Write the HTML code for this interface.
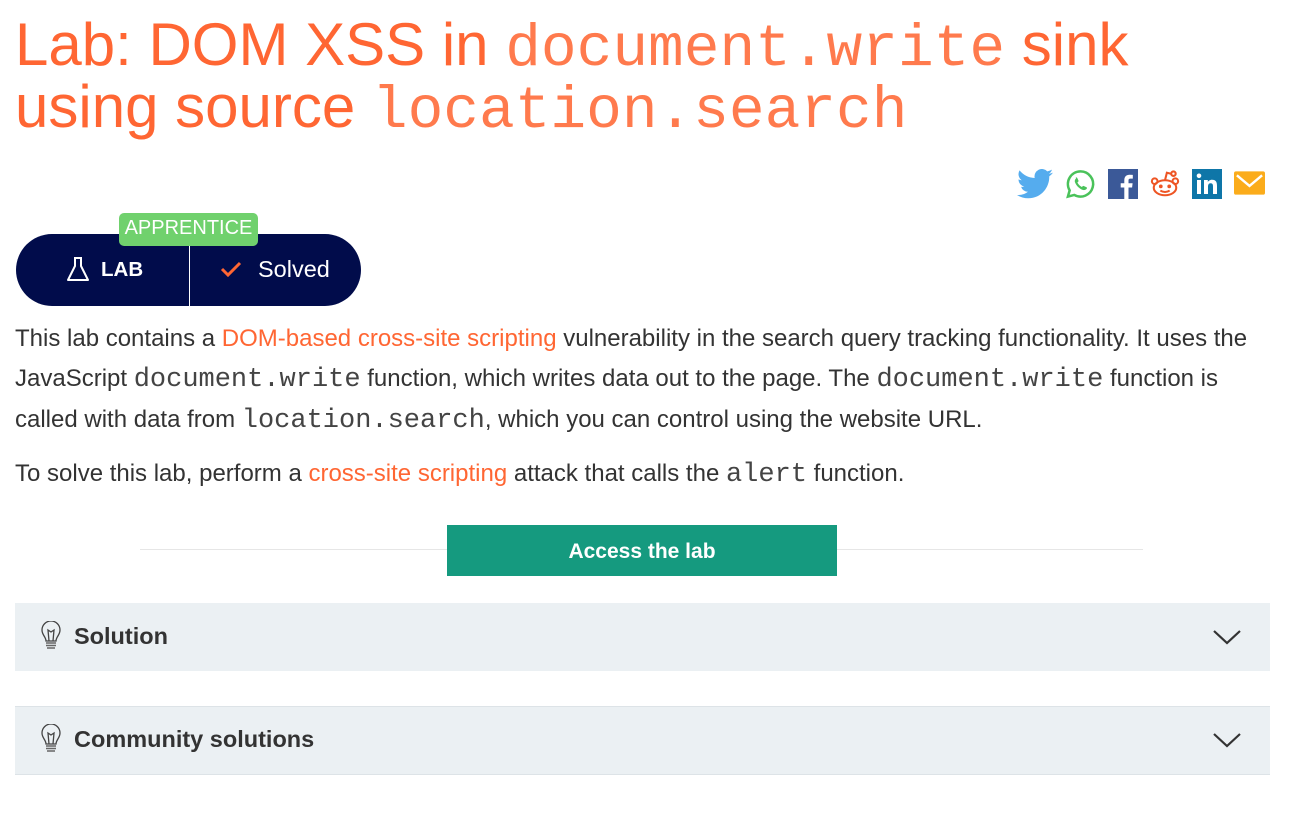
<!DOCTYPE html>
<html><head><meta charset="utf-8"><style>
body{margin:0;background:#fff;font-family:"Liberation Sans",Arial,sans-serif;color:#333;width:1293px;height:832px;overflow:hidden;position:relative}
h1{position:absolute;left:15px;top:16px;margin:0;font-size:60px;line-height:57px;font-weight:normal;color:#ff6633;width:1250px}
h1 code,p code{font-family:"Liberation Mono",monospace;font-weight:normal}
h1 code{font-size:59.5px;color:#ff7a4d}
.share{position:absolute;top:168px;left:1017px;display:flex;gap:12px;align-items:center}
.badge{position:absolute;left:16px;top:234px;width:345px;height:72px;background:#010c4b;border-radius:36px}
.app{position:absolute;left:119px;top:213px;width:139px;height:33px;background:#70d16d;color:#fff;border-radius:5px;font-size:20px;text-align:center;line-height:31px}
.div{position:absolute;left:189px;top:246px;width:1px;height:60px;background:#fff}
.lab{position:absolute;left:101px;top:258px;color:#fff;font-weight:bold;font-size:20.5px}
.sol{position:absolute;left:258px;top:256px;color:#fff;font-size:23.5px}
p{position:absolute;left:15px;margin:0;font-size:24px;line-height:40px;width:1265px;color:#333}
p code{font-size:27px;color:#444}
a{color:#ff6633;text-decoration:none}
.line{position:absolute;left:140px;top:549px;width:1003px;height:1px;background:#e6e6e6}
.btn{position:absolute;left:447px;top:525px;width:390px;height:51px;background:#159a7f;color:#fff;font-weight:bold;font-size:21px;text-align:center;line-height:53px}
.acc{position:absolute;left:15px;width:1255px;background:#ebf0f3;font-weight:bold;font-size:23.5px;color:#333}
.acc span{position:absolute;left:59px}
.acc svg.b{position:absolute;left:25px}
.acc svg.c{position:absolute;right:28px}
</style></head><body>
<h1>Lab: DOM XSS in <code>document.write</code> sink using source <code>location.search</code></h1>
<div class="share">
<svg width="36" height="30" viewBox="0 0 24 20"><path fill="#55acee" d="M24 2.4a9.8 9.8 0 0 1-2.8.8A4.9 4.9 0 0 0 23.3.4a9.9 9.9 0 0 1-3.1 1.2A4.9 4.9 0 0 0 11.8 6 14 14 0 0 1 1.7.9a4.9 4.9 0 0 0 1.5 6.6A4.9 4.9 0 0 1 1 6.9a4.9 4.9 0 0 0 3.9 4.8 4.9 4.9 0 0 1-2.2.1 4.9 4.9 0 0 0 4.6 3.4A9.9 9.9 0 0 1 0 17.3 14 14 0 0 0 7.5 19.5c9 0 14-7.5 14-14v-.6A10 10 0 0 0 24 2.4z"/></svg>
<svg width="31" height="32" viewBox="0 0 32 32"><path fill="none" stroke="#4ac25a" stroke-width="2.6" d="M16 3a13 13 0 0 0-11.2 19.6L3 29l6.6-1.7A13 13 0 1 0 16 3z"/><path fill="#4ac25a" d="M11 9.5c.5-.4 1.3-.4 1.6.2l1.3 2.8c.2.4 0 .9-.3 1.2l-.8.8c1 2 2.6 3.6 4.6 4.6l.8-.8c.3-.3.8-.5 1.2-.3l2.8 1.3c.6.3.6 1.1.2 1.6-1 1.2-2.6 1.8-4.2 1.2-3.6-1.4-6.5-4.3-7.9-7.9-.6-1.6 0-3.2 1.2-4.2z"/></svg>
<svg width="30" height="30" viewBox="0 0 30 30"><rect width="30" height="30" fill="#3b5998"/><path fill="#fff" d="M20.5 30V18.5h3.6l.5-4.2h-4.1v-2.7c0-1.2.3-2 2.1-2h2.2V5.9a29 29 0 0 0-3.2-.2c-3.2 0-5.3 1.900-5.3 5.5v3.1h-3.6v4.2h3.6V30z"/></svg>
<svg width="30" height="30" viewBox="0 0 32 30"><g fill="none" stroke="#ee5524" stroke-width="2.2"><ellipse cx="16" cy="19" rx="12" ry="8"/><circle cx="5" cy="12" r="3"/><circle cx="27" cy="12" r="3"/><circle cx="25" cy="4" r="2.4"/><path d="M16 11l2-8 5 1.2"/><path d="M11 22c3 2 7 2 10 0"/></g><circle cx="11.5" cy="17.5" r="2" fill="#ee5524"/><circle cx="20.5" cy="17.5" r="2" fill="#ee5524"/></svg>
<svg width="30" height="30" viewBox="0 0 30 30"><rect width="30" height="30" fill="#0e76a8"/><path fill="#fff" d="M5 11h4v14H5zM7 4.5a2.3 2.3 0 1 1 0 4.6 2.3 2.3 0 0 1 0-4.6zM12 11h3.8v2c.6-1.1 2-2.3 4.2-2.3 4.4 0 5 2.8 5 6.5V25h-4v-7c0-1.7 0-3.8-2.3-3.8S16 16 16 17.9V25h-4z"/></svg>
<svg width="31" height="26" viewBox="0 0 32 26"><rect width="32" height="24" rx="2" fill="#fbac1b"/><path d="M3 4l13 11L29 4" fill="none" stroke="#fff" stroke-width="2.5"/></svg>
</div>
<div class="badge"></div>
<div class="div"></div>
<div class="app">APPRENTICE</div>
<svg style="position:absolute;left:66px;top:256px" width="24" height="26" viewBox="0 0 24 26"><path d="M8 2h8M9 2v8L2 24h20L15 10V2" fill="none" stroke="#fff" stroke-width="2" stroke-linejoin="round"/></svg>
<div class="lab">LAB</div>
<svg style="position:absolute;left:220px;top:261px" width="22" height="16" viewBox="0 0 22 16"><path d="M2 8l6 6L20 2" fill="none" stroke="#ff6633" stroke-width="3"/></svg>
<div class="sol">Solved</div>
<p style="top:319px">This lab contains a <a>DOM-based cross-site scripting</a> vulnerability in the search query tracking functionality. It uses the JavaScript <code>document.write</code> function, which writes data out to the page. The <code>document.write</code> function is called with data from <code>location.search</code>, which you can control using the website URL.</p>
<p style="top:454px">To solve this lab, perform a <a>cross-site scripting</a> attack that calls the <code>alert</code> function.</p>
<div class="line"></div>
<div class="btn">Access the lab</div>
<div class="acc" style="top:603px;height:68px"><svg class="b" style="top:18px" width="22" height="30" viewBox="0 0 22 30"><path d="M6 20c0-4-4-6-4-11a9 9 0 0 1 18 0c0 5-4 7-4 11z M9 20l-1-11 3 2 3-2-1 11" fill="none" stroke="#444" stroke-width="1.3"/><path d="M6 22h10M6 24.5h10M7 27h8" stroke="#666" stroke-width="1.5"/></svg><span style="top:20px">Solution</span><svg class="c" style="top:26px" width="30" height="16" viewBox="0 0 30 16"><path d="M2 2l13 12L28 2" fill="none" stroke="#333" stroke-width="2.2"/></svg></div>
<div class="acc" style="top:706px;height:67px;border-top:1px solid #dde3e7;border-bottom:1px solid #dde3e7"><svg class="b" style="top:17px" width="22" height="30" viewBox="0 0 22 30"><path d="M6 20c0-4-4-6-4-11a9 9 0 0 1 18 0c0 5-4 7-4 11z M9 20l-1-11 3 2 3-2-1 11" fill="none" stroke="#444" stroke-width="1.3"/><path d="M6 22h10M6 24.5h10M7 27h8" stroke="#666" stroke-width="1.5"/></svg><span style="top:19px">Community solutions</span><svg class="c" style="top:25px" width="30" height="16" viewBox="0 0 30 16"><path d="M2 2l13 12L28 2" fill="none" stroke="#333" stroke-width="2.2"/></svg></div>
</body></html>
